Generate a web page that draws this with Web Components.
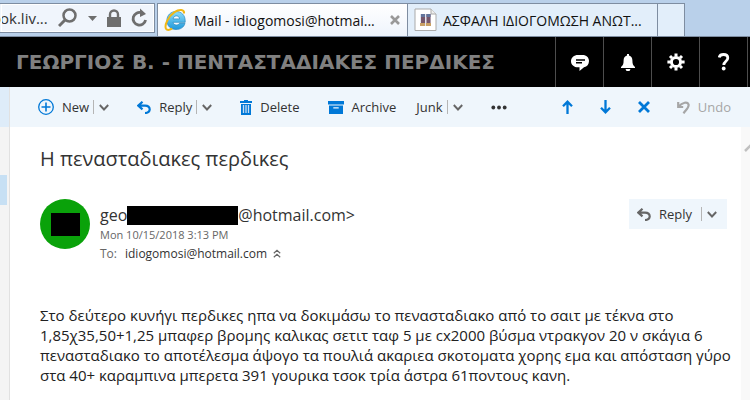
<!DOCTYPE html>
<html lang="el">
<head>
<meta charset="utf-8">
<title>Mail - idiogomosi@hotmail.com</title>
<style>
body { margin: 0; font-family: "Open Sans", "Noto Sans", sans-serif; color: #333; background: #fff; }
</style>
</head>
<body>
<mail-app></mail-app>
<script>
const define = (tag, html, setup) => {
  const t = document.createElement('template');
  t.innerHTML = html;
  customElements.define(tag, class extends HTMLElement {
    constructor() {
      super();
      this.attachShadow({ mode: 'open' }).append(t.content.cloneNode(true));
    }
    connectedCallback() { if (setup) setup(this, this.shadowRoot); }
  });
};

const line = (w, h, body, sw = 2) => `<svg width="${w}" height="${h}" viewBox="0 0 ${w} ${h}" fill="none" stroke="currentColor" stroke-width="${sw}">${body}</svg>`;
const solid = (w, h, body) => `<svg width="${w}" height="${h}" viewBox="0 0 ${w} ${h}" fill="currentColor">${body}</svg>`;
const icons = {
  search: line(20, 20, '<circle cx="11.5" cy="7.5" r="6"/><path d="M7.5 11.5 1 18" stroke-width="3"/>', 2.5),
  down: solid(9, 5, '<path d="M0 0h9L4.500 5z"/>'),
  lock: solid(14, 18, '<path d="M0 8h14v10H0z"/><path d="M3 9V5.500a4 4 0 0 1 8 0V9" fill="none" stroke="currentColor" stroke-width="2.4"/>'),
  refresh: line(17, 20, '<path d="M10.500 4.800A6.300 6.300 0 1 0 14.600 12" stroke-width="2.800"/><path d="M9 .5v8.500l6-3z" fill="currentColor" stroke="none"/>'),
  ie: `<svg width="24" height="24" viewBox="0 0 24 24" fill="none"><defs><linearGradient id="b" x2="0" y2="1"><stop stop-color="#8bdcf8"/><stop offset="1" stop-color="#2099dc"/></linearGradient></defs><path d="M12 3.500c5.500 0 9.200 3.700 9.200 9.500v1.300H9c.4 1.700 1.600 2.700 3.500 2.700 1.400 0 2.500-.6 3-1.700h5.500c-1.100 4-4.500 6.200-8.900 6.200-5.400 0-9.200-3.500-9.200-8.900s3.900-9.100 9.100-9.100zM9.100 10.900h6.500c-.2-1.800-1.500-3-3.200-3s-2.900 1.100-3.300 3z" fill="url(#b)" stroke="#2686bd" stroke-width=".7"/><path d="M20 5.500C20.500 1.500 15.500.8 10.500 4.200 4.200 8.500.2 17.200 2 20.700c1 1.800 3.600 1.400 6.200 0" stroke="#f1b713" stroke-width="2"/></svg>`,
  close: line(10, 10, '<path d="m1 1 8 8M9 1 1 9"/>', 2.6),
  page: `<svg width="23" height="24" viewBox="0 0 23 24"><path d="M1 1h16l5 5v16.500H1z" fill="#fff" stroke="#aaa"/><path d="M17 1v5h5" fill="#eee" stroke="#aaa"/><path d="M6 6h11v12H6z" fill="#e3e4ef"/><path d="M7 6h4v10H7zM12.500 6h4v10h-4z" fill="#76566a"/><path d="M7 6h4v3H7zM12.500 6h4v3h-4z" fill="#62749b"/><path d="M6 15h5v3H6zM12 15h5v3h-5z" fill="#c9a064"/></svg>`,
  chat: solid(18, 17, '<path d="M7 1h4.500C15.500 1 18 3.600 18 7s-2 5.700-5 6.200L8.500 17v-3.700H7C3 13.300 0 10.700 0 7.200S3 1 7 1z"/><path d="M5 6h9M5 8.800h6" stroke="#000" stroke-width="1.400"/>'),
  bell: solid(14, 17, '<path d="M6 0h2v1.500c2.300.6 3.400 2.300 3.400 5 0 3.200.6 5 2.600 6.500v1H0v-1c2-1.500 2.600-3.300 2.600-6.500 0-2.700 1.100-4.400 3.400-5zM4.500 15h5L8.500 17h-3z"/>'),
  gear: line(18, 18, '<circle cx="9" cy="9" r="4.600" stroke-width="3"/><path d="M9 .4v3M9 14.600v3M.4 9h3M14.600 9h3M3 3l2 2M13 13l2 2M15 3l-2 2M5 13l-2 2" stroke-width="3"/>'),
  help: line(12, 18, '<path d="M1.200 4.500C1.600 2.400 3.200 1.500 5.500 1.500c2.600 0 4.300 1.300 4.300 3.500 0 3.300-4 3.200-4 7" stroke-width="2.800"/><circle cx="5.700" cy="15.500" r="1.900" fill="currentColor" stroke="none"/>'),
  plus: line(16, 16, '<circle cx="8" cy="8" r="7.300" stroke-width="1.300"/><path d="M8 3.500v9M3.500 8h9" stroke-width="1.600"/>'),
  reply: line(14, 13, '<path d="M5.500.8 1.300 4.600l4.200 3.800M1.500 4.600H8c6 0 6.500 7.400 0 7.400" stroke-width="2.200"/>'),
  chev: line(10, 7, '<path d="m.8 1 4.200 4.500L9.200 1"/>', 1.900),
  trash: solid(12, 15, '<path d="M4 0h4v1h4v2H0V1h4zM1 4h10v11H1z"/><path d="M3.500 5v8M6 5v8M8.500 5v8" stroke="#c6def5" stroke-width="1.300"/>'),
  archive: solid(16, 13, '<path d="M0 0h16v3.500H0z"/><path fill-rule="evenodd" d="M1 4.500h14V13H1zm4.300 1.700v1.300h5.400V6.200z"/>'),
  dots: solid(16, 5, '<circle cx="2.300" cy="2.500" r="1.900"/><circle cx="8" cy="2.500" r="1.900"/><circle cx="13.700" cy="2.500" r="1.900"/>'),
  up: line(11, 14, '<path d="M5.500 14V1.500M1 6.300l4.500-4.600L10 6.300"/>', 2.300),
  dn: line(11, 14, '<path d="M5.500 0v12.500M1 7.700l4.500 4.600L10 7.700"/>', 2.300),
  x: line(12, 12, '<path d="m1 1 10 10M11 1 1 11"/>', 2.800),
  undo: line(13, 13, '<path d="M1.200 1v5h5M1.500 5.800C5.500 1 10.500.7 11.500 3.300c1 2.800-2 5-5 9" stroke-width="2.200"/>'),
  collapse: line(8, 9, '<path d="m.8 4.300 3.200-3 3.200 3M.8 8.300l3.200-3 3.200 3"/>', 1.200),
  scroll: line(12, 10, '<path d="m1 9 6-6 6 6"/>', 2.500)
};

define('ui-icon', `<style>:host{display:inline-flex;flex:none} svg{display:block}</style><span></span>`,
  (el, root) => { root.querySelector('span').innerHTML = icons[el.getAttribute('name')]; });

define('browser-tab', `<style>
:host{display:flex;align-items:center;gap:6px;box-sizing:border-box;width:250px;padding:0 7px 0 6px;border-left:1px solid #7e8da1;background:#e2eefa;color:#111;font-size:14px}
:host([active]){background:linear-gradient(#fff,#eef4fc)}
a{flex:1;color:inherit;text-decoration:none;white-space:nowrap;overflow:hidden;text-overflow:ellipsis}
button{display:flex;border:0;padding:0;background:none;color:#999}
:host(:not([active])) button{display:none}
</style><slot name="icon"></slot><a href="#"><slot></slot></a><button aria-label="Close tab"><ui-icon name="close"></ui-icon></button>`);

define('browser-bar', `<style>
:host{display:flex;align-items:stretch;gap:2px;background:#b9d0ea;padding-top:3px;height:33px;border-bottom:1px solid #7e8da1;color:#6e6e6e}
.address{box-sizing:border-box;width:155px;margin-bottom:3px;border:1px solid #7e8da1;border-left:0;outline:1px solid #fff;outline-offset:-2px;background:#f0f5fc;display:flex;align-items:center;padding-right:6px}
input{border:0;background:none;width:46px;padding:0;font:15px "Open Sans",sans-serif;color:#333;flex:1;min-width:0}
button{display:flex;border:0;padding:0;background:none;color:inherit}
.tools{display:flex;align-items:center;gap:10px}
.tabs{display:flex;border-top:1px solid #7e8da1}
.new{width:28px;border:1px solid #7e8da1;border-width:0 1px;background:#e2eefa}
</style>
<div class="address"><input aria-label="Address" value="ok.liv..."><div class="tools">
<button aria-label="Search"><ui-icon name="search"></ui-icon></button><button aria-label="Address history"><ui-icon name="down"></ui-icon></button>
<button aria-label="Security"><ui-icon name="lock"></ui-icon></button><button aria-label="Refresh"><ui-icon name="refresh"></ui-icon></button></div></div>
<div class="tabs"><browser-tab active><ui-icon slot="icon" name="ie"></ui-icon>Mail - idiogomosi@hotmai...</browser-tab>
<browser-tab><ui-icon slot="icon" name="page"></ui-icon>ΑΣΦΑΛΗ ΙΔΙΟΓΟΜΩΣΗ ΑΝΩΤ...</browser-tab><button class="new" aria-label="New tab"></button></div>`);

define('account-header', `<style>
:host{display:flex;height:50px;background:#000;color:#fff;padding-right:2px}
h1{flex:1;margin:0;padding-left:16px;font:bold 20px/50px "DejaVu Sans",sans-serif;color:#808080;white-space:nowrap}
nav{display:flex;border-right:1px solid #4d4d4d}
button{width:48px;display:flex;align-items:center;justify-content:center;border:0;border-left:1px solid #4d4d4d;background:none;color:inherit;padding:0}
</style><h1><slot></slot></h1><nav>
<button aria-label="Chat"><ui-icon name="chat"></ui-icon></button><button aria-label="Notifications"><ui-icon name="bell"></ui-icon></button>
<button aria-label="Settings"><ui-icon name="gear"></ui-icon></button><button aria-label="Help"><ui-icon name="help"></ui-icon></button></nav>`);

define('tool-button', `<style>
:host{display:flex;align-items:center;color:#333;font-size:13px}
button{display:flex;align-items:center;gap:8px;border:0;padding:0;background:none;color:inherit;font:inherit;line-height:20px;white-space:nowrap}
ui-icon{color:var(--icon,#0078d7)}
.more{display:none;padding-left:5px;margin-left:4px;border-left:1px solid #b5b5b5;height:14px}
.more ui-icon{color:#666}
:host([split]) .more{display:flex}
:host([roomy]) .more{margin-left:9px}
</style><button class="main"><slot></slot></button><button class="more" aria-label="More options"><ui-icon name="chev"></ui-icon></button>`,
  (el, root) => {
    const name = el.getAttribute('icon'), main = root.querySelector('.main');
    if (name && !main.querySelector('ui-icon')) {
      const i = document.createElement('ui-icon');
      i.setAttribute('name', name);
      main.prepend(i);
    }
    if (el.hasAttribute('label')) { main.querySelector('slot')?.remove(); main.setAttribute('aria-label', el.getAttribute('label')); }
  });

define('mail-toolbar', `<style>
:host{display:flex;align-items:center;justify-content:space-between;height:40px;padding:0 19px 0 28px;background:#eff6fc}
div{display:flex;align-items:center;gap:27px}
.left{gap:28px}
.group{gap:20px}
.muted{--icon:#a6a6a6;color:#a6a6a6}
.dark{--icon:#333}
</style><div class="left"><tool-button icon="plus" split>New</tool-button><tool-button icon="reply" split>Reply</tool-button>
<tool-button icon="trash">Delete</tool-button>
<div class="group"><tool-button icon="archive">Archive</tool-button><tool-button split>Junk</tool-button></div>
<tool-button class="dark" icon="dots" label="More commands"></tool-button></div>
<div><tool-button icon="up" label="Previous"></tool-button><tool-button icon="dn" label="Next"></tool-button><tool-button icon="x" label="Close"></tool-button><tool-button class="muted" icon="undo">Undo</tool-button></div>`);

define('mail-message', `<style>
:host{display:block;flex:1;padding:16px 14px 12px 30px;min-width:0}
h2{margin:0;font-weight:400;font-size:20px;line-height:32px}
header{display:flex;align-items:flex-start;gap:10px;padding-top:24px}
.avatar{width:50px;height:50px;border-radius:50%;background:#0aa20a;display:grid;place-items:center}
.avatar i{width:29px;height:23px;background:#000}
.who{flex:1}
.from{display:flex;align-items:center;font-size:16px;line-height:20px;padding-top:6px}
.from i{width:111px;height:19px;background:#000}
.meta{font-size:12px;line-height:19px;color:#666;display:flex;align-items:center}
.date{font-size:11px}
.meta a{color:#333;text-decoration:none;margin:0 6px 0 8px}
.meta button{display:flex;border:0;padding:0;background:none;color:#666}
tool-button{background:#eff6fc;padding:0 10px 0 8px;height:30px;--icon:#666}
p{margin:0;padding-top:42px;font-size:15px;line-height:20px;color:#212121;white-space:nowrap}
</style>
<h2>Η πενασταδιακες περδικες</h2>
<header><div class="avatar"><i></i></div>
<div class="who"><div class="from"><span>geo</span><i></i><span>@hotmail.com&gt;</span></div>
<div class="meta date">Mon 10/15/2018 3:13 PM</div>
<div class="meta">To: <a href="#">idiogomosi@hotmail.com</a><button aria-label="Collapse details"><ui-icon name="collapse"></ui-icon></button></div></div>
<tool-button icon="reply" split roomy>Reply</tool-button></header>
<p>Στο δεύτερο κυνήγι περδικες ηπα να δοκιμάσω το πενασταδιακο από το σαιτ με τέκνα στο<br>1,85χ35,50+1,25 μπαφερ βρομης καλικας σετιτ ταφ 5 με cx2000 βύσμα ντρακγον 20 ν σκάγια 6<br>πενασταδιακο το αποτέλεσμα άψογο τα πουλιά ακαριεα σκοτοματα χορης εμα και απόσταση γύρο<br>στα 40+ καραμπινα μπερετα 391 γουρικα τσοκ τρία άστρα 61ποντους κανη.</p>`);

define('folder-rail', `<style>
:host{display:flex;flex-direction:column;flex:none;width:9px;border-right:1px solid #e1e1e1;background:#f4f4f4}
.top{height:40px;background:#deecf9}
.selected{height:30px;width:7px;margin-top:48px;background:#c7e0f4}
</style><div class="top"></div><div class="selected"></div>`);

define('scroll-rail', `<style>
:host{display:block;flex:none;width:9px;background:#f9f9f9;overflow:hidden;color:#c0c0c0}
ui-icon{padding:15px 0 0 3px}
</style><ui-icon name="scroll"></ui-icon>`);

define('mail-app', `<style>
:host{display:flex;flex-direction:column;min-height:100vh;overflow:hidden}
main{display:flex;flex:1}
.pane{flex:1;min-width:0;display:flex;flex-direction:column}
.reading{flex:1;display:flex}
</style><browser-bar></browser-bar><account-header>ΓΕΩΡΓΙΟΣ Β. - ΠΕΝΤΑΣΤΑΔΙΑΚΕΣ ΠΕΡΔΙΚΕΣ</account-header>
<main><folder-rail></folder-rail><div class="pane"><mail-toolbar></mail-toolbar><div class="reading"><mail-message></mail-message><scroll-rail></scroll-rail></div></div></main>`);
</script>
</body>
</html>
